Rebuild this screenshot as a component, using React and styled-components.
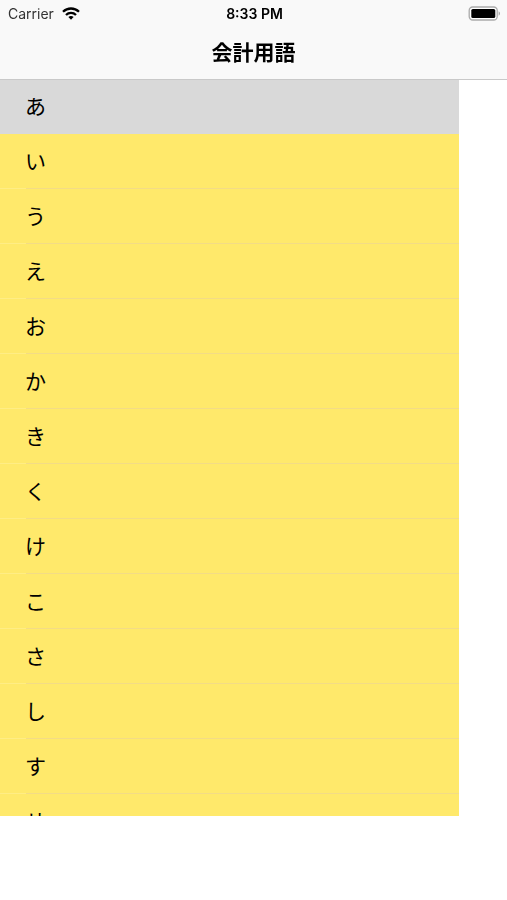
import React, { Fragment, useState } from "react"
import styled, { createGlobalStyle } from "styled-components"

const COLORS = {
  bar: "#f9f9f9",
  barLine: "#c9c9c9",
  row: "#ffe96b",
  selected: "#d9d9d9",
  separator: "#f3dc86",
  inset: "#ffed85",
}

const KANA = "あいうえおかきくけこさしすせ".split("")

const GlobalStyles = createGlobalStyle`
  * {
    box-sizing: border-box;
  }

  body {
    margin: 0;
    background-color: #fff;
    color: #000;
    font-family: "Noto Sans CJK JP", sans-serif;
  }
`

const Screen = styled.div`
  display: flex;
  flex-direction: column;
  height: 100vh;
`

const Header = styled.header`
  flex: none;
  height: 79px;
  background-color: ${COLORS.bar};
  box-shadow: 0 1px 0 ${COLORS.barLine};
  z-index: 1;
`

const StatusBar = styled.div`
  display: grid;
  grid-template-columns: 1fr auto 1fr;
  align-items: center;
  height: 27px;
  padding: 0 6px 0 8px;
  font-family: Inter, sans-serif;
  font-size: 14px;
  line-height: 20px;
`

const Carrier = styled.div`
  display: flex;
  align-items: center;
  gap: 8px;
  color: #333;
`

const Clock = styled.time`
  font-weight: 600;
`

const Battery = styled.svg`
  justify-self: end;
`

const Title = styled.h1`
  margin: 0;
  font-size: 21px;
  font-weight: 700;
  line-height: 48px;
  text-align: center;
`

const List = styled.ul`
  flex: 1;
  min-height: 0;
  margin: 0 48px 84px 0;
  padding: 0;
  overflow-y: auto;
  scrollbar-width: none;
  list-style: none;
  background-color: ${COLORS.row};
`

const Row = styled.button`
  display: block;
  width: 100%;
  height: 55px;
  padding: 0 25px 2px;
  border: 0;
  outline: 0;
  cursor: pointer;
  font: inherit;
  font-size: 21px;
  line-height: 53px;
  text-align: left;
  color: #000;
  background: ${(props) =>
    props.$selected
      ? COLORS.selected
      : `linear-gradient(to right, ${COLORS.inset} 26px, ${COLORS.separator} 26px) bottom / 100% 1px no-repeat ${COLORS.row}`};
`

const WifiIcon = () => (
  <svg width="18" height="13" viewBox="0 0 18 13" aria-hidden="true">
    <g fill="none" stroke="#000" strokeWidth="2.3">
      <path d="M1 4.8C5.5.4 12.5.4 17 4.8" />
      <path d="M4 8C6.8 5.2 11.2 5.2 14 8" />
    </g>
    <path d="M6.4 10C7.9 8.6 10.1 8.6 11.6 10L9 12.7Z" />
  </svg>
)

const BatteryIcon = () => (
  <Battery width="33" height="15" viewBox="0 0 33 15" aria-hidden="true">
    <rect
      x="1.2"
      y="1"
      width="28"
      height="13"
      rx="3.5"
      fill="#fff"
      stroke="#aaa"
      strokeWidth="1.3"
    />
    <rect x="3.3" y="3" width="24" height="9" rx="1.6" />
    <path d="M30.7 5.3c1.6.7 1.6 3.7 0 4.4z" fill="#999" />
  </Battery>
)

const App = () => {
  const [selected, setSelected] = useState("あ")

  return (
    <Fragment>
      <GlobalStyles />
      <Screen>
        <Header>
          <StatusBar>
            <Carrier>
              Carrier
              <WifiIcon />
            </Carrier>
            <Clock>8:33 PM</Clock>
            <BatteryIcon />
          </StatusBar>
          <Title>会計用語</Title>
        </Header>
        <List>
          {KANA.map((kana) => (
            <li key={kana}>
              <Row
                type="button"
                $selected={kana === selected}
                aria-pressed={kana === selected}
                onClick={() => setSelected(kana)}
              >
                {kana}
              </Row>
            </li>
          ))}
        </List>
      </Screen>
    </Fragment>
  )
}

export default App
